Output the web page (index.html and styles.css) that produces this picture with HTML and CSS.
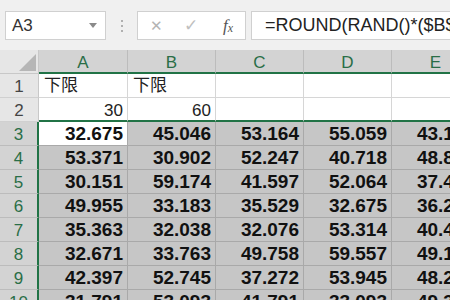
FILE: index.html
```html
<!DOCTYPE html>
<html lang="en">
<head>
    <meta charset="UTF-8">
    <title>Sheet</title>
    <link rel="stylesheet" href="styles.css">
</head>
<body>
    <div class="formula-bar">
        <div class="name-box">
            <span class="name-text">A3</span>
            <span class="drop-arrow"></span>
        </div>
        <div class="dots"><i></i><i></i><i></i></div>
        <div class="fx-buttons">
            <span class="btn-cancel">✕</span>
            <span class="btn-ok">✓</span>
            <span class="btn-fx">f<sub>x</sub></span>
        </div>
        <div class="formula-input">=ROUND(RAND()*($B$2-$A$2)+$A$2,3)</div>
    </div>

    <div class="sheet">
        <div class="corner"><span class="corner-tri"></span></div>
        <div class="col-head">A</div>
        <div class="col-head">B</div>
        <div class="col-head">C</div>
        <div class="col-head">D</div>
        <div class="col-head">E</div>

        <div class="row-head">1</div>
        <div class="cell label">下限</div>
        <div class="cell label">下限</div>
        <div class="cell"></div>
        <div class="cell"></div>
        <div class="cell"></div>

        <div class="row-head">2</div>
        <div class="cell plain edge">30</div>
        <div class="cell plain edge">60</div>
        <div class="cell edge"></div>
        <div class="cell edge"></div>
        <div class="cell edge"></div>

        <div class="row-head sel">3</div>
        <div class="cell active">32.675</div>
        <div class="cell sel">45.046</div>
        <div class="cell sel">53.164</div>
        <div class="cell sel">55.059</div>
        <div class="cell sel">43.126</div>

        <div class="row-head sel">4</div>
        <div class="cell sel">53.371</div>
        <div class="cell sel">30.902</div>
        <div class="cell sel">52.247</div>
        <div class="cell sel">40.718</div>
        <div class="cell sel">48.853</div>

        <div class="row-head sel">5</div>
        <div class="cell sel">30.151</div>
        <div class="cell sel">59.174</div>
        <div class="cell sel">41.597</div>
        <div class="cell sel">52.064</div>
        <div class="cell sel">37.418</div>

        <div class="row-head sel">6</div>
        <div class="cell sel">49.955</div>
        <div class="cell sel">33.183</div>
        <div class="cell sel">35.529</div>
        <div class="cell sel">32.675</div>
        <div class="cell sel">36.247</div>

        <div class="row-head sel">7</div>
        <div class="cell sel">35.363</div>
        <div class="cell sel">32.038</div>
        <div class="cell sel">32.076</div>
        <div class="cell sel">53.314</div>
        <div class="cell sel">40.463</div>

        <div class="row-head sel">8</div>
        <div class="cell sel">32.671</div>
        <div class="cell sel">33.763</div>
        <div class="cell sel">49.758</div>
        <div class="cell sel">59.557</div>
        <div class="cell sel">49.136</div>

        <div class="row-head sel">9</div>
        <div class="cell sel">42.397</div>
        <div class="cell sel">52.745</div>
        <div class="cell sel">37.272</div>
        <div class="cell sel">53.945</div>
        <div class="cell sel">48.215</div>

        <div class="row-head sel">10</div>
        <div class="cell sel">31.791</div>
        <div class="cell sel">53.093</div>
        <div class="cell sel">41.791</div>
        <div class="cell sel">33.093</div>
        <div class="cell sel">49.318</div>
    </div>
</body>
</html>
```

FILE: styles.css
```css
body {
    margin: 0;
    width: 450px;
    height: 300px;
    overflow: hidden;
    background-color: #ffffff;
    font-family: "Liberation Sans", Arial, sans-serif;
}
.formula-bar {
    display: flex;
    align-items: flex-start;
    height: 50px;
    padding: 11px 0 0 5px;
    box-sizing: border-box;
    background-color: #f0f0f0;
    white-space: nowrap;
}
.name-box {
    flex-shrink: 0;
    display: flex;
    align-items: center;
    justify-content: space-between;
    width: 101px;
    height: 29px;
    padding: 0 8px 0 6px;
    box-sizing: border-box;
    background: #ffffff;
    border: 1px solid #d0d0d0;
}
.name-text {
    font-size: 17px;
    color: #333333;
}
.drop-arrow {
    width: 0;
    height: 0;
    border-left: 4px solid transparent;
    border-right: 4px solid transparent;
    border-top: 5px solid #8a8a8a;
}
.dots {
    flex-shrink: 0;
    display: flex;
    flex-direction: column;
    align-items: center;
    gap: 3px;
    width: 31px;
    padding-top: 9px;
}
.dots i {
    width: 2px;
    height: 2px;
    background: #b0b0b0;
}
.fx-buttons {
    flex-shrink: 0;
    display: flex;
    align-items: center;
    width: 109px;
    height: 29px;
    box-sizing: border-box;
    background: #ffffff;
    border: 1px solid #d0d0d0;
    color: #b4b4b4;
}
.btn-cancel {
    margin-left: 12px;
    font-size: 15px;
}
.btn-ok {
    margin-left: 21px;
    font-size: 17px;
    color: #c0c0c0;
}
.btn-fx {
    margin-left: 25px;
    font-family: "Liberation Serif", serif;
    font-style: italic;
    font-size: 17px;
    color: #555555;
}
.btn-fx sub {
    font-size: 12px;
    vertical-align: -1px;
}
.formula-input {
    flex-grow: 1;
    min-width: 0;
    height: 29px;
    margin-left: 5px;
    padding-left: 13px;
    box-sizing: border-box;
    background: #ffffff;
    border: 1px solid #d0d0d0;
    border-right: none;
    font-size: 18px;
    line-height: 27px;
    color: #222222;
    overflow: hidden;
}
.sheet {
    display: grid;
    grid-template-columns: 39px 89px 88px 88px 88px 88px;
    grid-auto-rows: 24px;
}
.sheet > div {
    display: flex;
    align-items: center;
    box-sizing: border-box;
    overflow: hidden;
    white-space: nowrap;
}
.corner {
    justify-content: flex-end;
    align-items: flex-end !important;
    padding: 0 2px 2px 0;
    background: #e6e6e6;
    border-right: 1px solid #c8c8c8;
    border-bottom: 1px solid #c8c8c8;
}
.corner-tri {
    width: 0;
    height: 0;
    border-left: 17px solid transparent;
    border-bottom: 17px solid #b6b6b6;
}
.col-head {
    justify-content: center;
    padding-top: 3px;
    background: #d3d3d3;
    border-right: 1px solid #bcbcbc;
    border-bottom: 2px solid #217346;
    font-size: 17px;
    color: #2a6e47;
}
.row-head {
    justify-content: center;
    padding-top: 2px;
    background: #e6e6e6;
    border-right: 1px solid #c8c8c8;
    border-bottom: 1px solid #d0d0d0;
    font-size: 17px;
    color: #444444;
}
.row-head.sel {
    background: #d3d3d3;
    border-right: 2px solid #217346;
    border-bottom-color: #bcbcbc;
    color: #2a6e47;
}
.cell {
    justify-content: flex-end;
    padding-right: 4px;
    border-right: 1px solid #d6d6d6;
    border-bottom: 1px solid #d6d6d6;
    font-size: 19px;
    font-weight: bold;
    color: #111111;
}
.cell.label {
    justify-content: flex-start;
    align-items: flex-end !important;
    padding: 0 0 1px 5px;
    font-family: "Liberation Sans", "Noto Sans CJK SC", sans-serif;
    font-size: 17px;
    font-weight: normal;
    color: #222222;
}
.cell.plain {
    padding-top: 3px;
    font-size: 17px;
    font-weight: normal;
    color: #222222;
}
.cell.edge {
    border-bottom: 2px solid #217346;
}
.cell.sel {
    background: #c6c6c6;
    border-right-color: #a9a9a9;
    border-bottom-color: #a9a9a9;
}
.cell.active {
    background: #ffffff;
    border-right-color: #a9a9a9;
    border-bottom-color: #a9a9a9;
}
```
